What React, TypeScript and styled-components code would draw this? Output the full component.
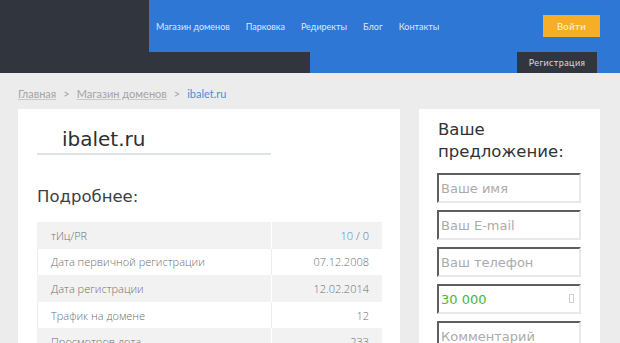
import React from 'react'
import styled, { createGlobalStyle } from 'styled-components'

const GlobalStyle = createGlobalStyle`
    html, body {
        margin: 0;
        padding: 0;
        background: #ececec;
        overflow: hidden;
    }
    * {
        box-sizing: border-box;
    }
`

const Header = styled.header`
    display: flex;
    height: 73px;
    background: #31363e;
`
const Logo = styled.div`
    width: 149px;
`
const NavArea = styled.div`
    flex: 1;
    display: flex;
    flex-direction: column;
`
const NavRow = styled.nav`
    height: 52px;
    display: flex;
    align-items: center;
    padding: 0 20px 0 7px;
    background: #2e77d5;
    gap: 16px;
`
const NavLink = styled.a`
    font-family: Lato, sans-serif;
    font-size: 9px;
    letter-spacing: 0;
    color: #dfe8f6;
    text-decoration: none;
`
const LoginButton = styled.button`
    margin-left: auto;
    width: 57px;
    height: 22px;
    border: 0;
    background: #f5ae25;
    color: #fff5e0;
    font-family: Lato, sans-serif;
    font-size: 9.5px;
    letter-spacing: 0.4px;
    padding: 0;
`
const SubRow = styled.div`
    height: 21px;
    display: flex;
`
const SubDark = styled.div`
    width: 161px;
    background: #31363e;
`
const SubBlue = styled.div`
    flex: 1;
    display: flex;
    justify-content: flex-end;
    padding-right: 23px;
    background: #2e77d5;
`
const RegisterTab = styled.a`
    width: 80px;
    display: flex;
    align-items: center;
    justify-content: center;
    background: #31363e;
    color: #d8dbe0;
    font-family: Lato, sans-serif;
    font-size: 9px;
    letter-spacing: 0.4px;
`

const Breadcrumbs = styled.div`
    height: 36px;
    display: flex;
    align-items: center;
    gap: 7px;
    padding: 4px 0 0 18px;
    font-family: Lato, sans-serif;
    font-size: 11px;
    color: #a4a4a4;
`
const Crumb = styled.a<{ $current?: boolean }>`
    color: ${({ $current }) => ($current ? '#4a8fd8' : '#a4a4a4')};
    text-decoration: ${({ $current }) => ($current ? 'none' : 'underline')};
    text-decoration-color: #c8c8c8;
`

const Content = styled.div`
    display: flex;
    gap: 19px;
    padding: 0 20px 0 18px;
`
const MainCard = styled.section`
    width: 382px;
    height: 240px;
    background: #fff;
    padding: 18px 0 0 19px;
`
const TitleBox = styled.div`
    width: 234px;
    padding: 0 0 2px 25px;
    border-bottom: 2px solid #e0e3e6;
`
const DomainTitle = styled.h1`
    margin: 0;
    font-family: 'DejaVu Sans', sans-serif;
    font-weight: normal;
    font-size: 20px;
    line-height: 24px;
    color: #2b2f33;
`
const SectionTitle = styled.h2`
    margin: 31px 0 0;
    font-family: 'DejaVu Sans', sans-serif;
    font-weight: normal;
    font-size: 16.5px;
    line-height: 22px;
    color: #3b3f44;
`
const Table = styled.div`
    margin-top: 14px;
    width: 345px;
`
const Row = styled.div<{ $shaded: boolean }>`
    display: grid;
    grid-template-columns: 235px 1fr;
    height: 26.6px;
    background: ${({ $shaded }) => ($shaded ? '#f2f2f2' : '#fff')};
`
const Cell = styled.div<{ $right?: boolean; $shaded: boolean }>`
    display: flex;
    align-items: center;
    justify-content: ${({ $right }) => ($right ? 'flex-end' : 'flex-start')};
    padding: ${({ $right }) => ($right ? '0 13px 0 0' : '0 0 0 13px')};
    font-family: 'Open Sans', sans-serif;
    font-weight: 300;
    font-size: 11px;
    color: #6f6f6f;
    border-right: ${({ $right, $shaded }) => ($right ? 'none' : `1px solid ${$shaded ? '#fff' : '#eeeeee'}`)};
    border-left: ${({ $right, $shaded }) => ($right ? 'none' : `1px solid ${$shaded ? '#f2f2f2' : '#eeeeee'}`)};
`
const Accent = styled.span`
    color: #3f88d9;
`
const Muted = styled.span`
    color: #6f6f6f;
    margin-left: 3px;
`

const SideCard = styled.aside`
    width: 181px;
    height: 240px;
    background: #fff;
    padding: 10px 0 0 18px;
`
const OfferTitle = styled.h2`
    margin: 0 0 10px 1px;
    font-family: 'DejaVu Sans', sans-serif;
    font-weight: normal;
    font-size: 16.5px;
    line-height: 22px;
    color: #2f3338;
`
const Form = styled.form`
    display: flex;
    flex-direction: column;
    gap: 7px;
`
const FieldWrap = styled.div`
    position: relative;
    width: 144px;
`
const Field = styled.input<{ $green?: boolean }>`
    display: block;
    width: 144px;
    height: 30px;
    padding: 0 2px;
    border-style: solid;
    border-width: 2px;
    border-color: #5e5e5e #e8e8e8 #e8e8e8 #5e5e5e;
    outline: none;
    font-family: 'DejaVu Sans', sans-serif;
    font-size: 13px;
    color: ${({ $green }) => ($green ? '#4bb53a' : '#333')};
    background: #fff;
    &::placeholder {
        color: #ababab;
    }
`
const Spinner = styled.span`
    position: absolute;
    right: 7px;
    top: 10px;
    width: 5px;
    height: 9px;
    border: 1px solid #d0d0d0;
`

const details = [
    { label: 'Дата первичной регистрации', value: '07.12.2008' },
    { label: 'Дата регистрации', value: '12.02.2014' },
    { label: 'Трафик на домене', value: '12' },
    { label: 'Просмотров лота', value: '233' },
]

const App = () => {
    return (
        <>
            <GlobalStyle />
            <Header>
                <Logo />
                <NavArea>
                    <NavRow>
                        <NavLink>Магазин доменов</NavLink>
                        <NavLink>Парковка</NavLink>
                        <NavLink>Редиректы</NavLink>
                        <NavLink>Блог</NavLink>
                        <NavLink>Контакты</NavLink>
                        <LoginButton>Войти</LoginButton>
                    </NavRow>
                    <SubRow>
                        <SubDark />
                        <SubBlue>
                            <RegisterTab>Регистрация</RegisterTab>
                        </SubBlue>
                    </SubRow>
                </NavArea>
            </Header>

            <Breadcrumbs>
                <Crumb>Главная</Crumb>
                <span>&gt;</span>
                <Crumb>Магазин доменов</Crumb>
                <span>&gt;</span>
                <Crumb $current>ibalet.ru</Crumb>
            </Breadcrumbs>

            <Content>
                <MainCard>
                    <TitleBox>
                        <DomainTitle>ibalet.ru</DomainTitle>
                    </TitleBox>
                    <SectionTitle>Подробнее:</SectionTitle>
                    <Table>
                        <Row $shaded>
                            <Cell $shaded>тИц/PR</Cell>
                            <Cell $shaded $right>
                                <Accent>10</Accent>
                                <Muted>/ 0</Muted>
                            </Cell>
                        </Row>
                        {details.map((d, i) => (
                            <Row key={d.label} $shaded={i % 2 === 1}>
                                <Cell $shaded={i % 2 === 1}>{d.label}</Cell>
                                <Cell $shaded={i % 2 === 1} $right>{d.value}</Cell>
                            </Row>
                        ))}
                    </Table>
                </MainCard>

                <SideCard>
                    <OfferTitle>Ваше<br />предложение:</OfferTitle>
                    <Form>
                        <Field placeholder='Ваше имя' />
                        <Field placeholder='Ваш E-mail' />
                        <Field placeholder='Ваш телефон' />
                        <FieldWrap>
                            <Field $green defaultValue='30 000' />
                            <Spinner />
                        </FieldWrap>
                        <Field placeholder='Комментарий' />
                    </Form>
                </SideCard>
            </Content>
        </>
    )
}

export default App
